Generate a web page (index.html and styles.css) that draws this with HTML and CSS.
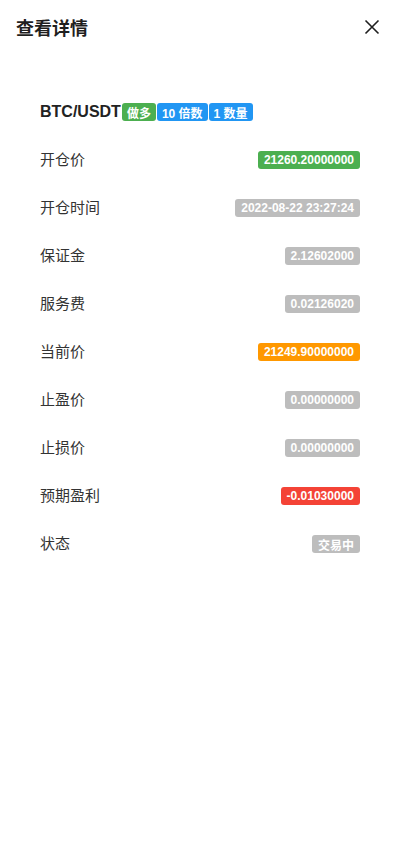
FILE: index.html
```html
<!DOCTYPE html>
<html lang="zh-CN">
  <head>
    <meta charset="UTF-8" />
    <meta name="viewport" content="width=device-width, initial-scale=1.0" />
    <title>查看详情</title>
    <link rel="stylesheet" href="styles.css">
  </head>
  <body>
    <header class="top">
      <h1>查看详情</h1>
      <button class="close" aria-label="关闭">
        <svg width="16" height="16" viewBox="0 0 16 16">
          <path d="M1.5 1.5 L14.5 14.5 M14.5 1.5 L1.5 14.5" stroke="#1f1f1f" stroke-width="1.6" fill="none" />
        </svg>
      </button>
    </header>
    <main class="detail">
      <div class="row">
        <div class="pair">
          <span class="symbol">BTC/USDT</span>
          <span class="tag green">做多</span>
          <span class="tag blue">10 倍数</span>
          <span class="tag blue">1 数量</span>
        </div>
      </div>
      <div class="row">
        <span class="label">开仓价</span>
        <span class="tag green">21260.20000000</span>
      </div>
      <div class="row">
        <span class="label">开仓时间</span>
        <span class="tag gray">2022-08-22 23:27:24</span>
      </div>
      <div class="row">
        <span class="label">保证金</span>
        <span class="tag gray">2.12602000</span>
      </div>
      <div class="row">
        <span class="label">服务费</span>
        <span class="tag gray">0.02126020</span>
      </div>
      <div class="row">
        <span class="label">当前价</span>
        <span class="tag orange">21249.90000000</span>
      </div>
      <div class="row">
        <span class="label">止盈价</span>
        <span class="tag gray">0.00000000</span>
      </div>
      <div class="row">
        <span class="label">止损价</span>
        <span class="tag gray">0.00000000</span>
      </div>
      <div class="row">
        <span class="label">预期盈利</span>
        <span class="tag red">-0.01030000</span>
      </div>
      <div class="row">
        <span class="label">状态</span>
        <span class="tag gray">交易中</span>
      </div>
    </main>
  </body>
</html>
```

FILE: styles.css
```css
body,
html {
  margin: 0;
  padding: 0;
  background-color: #fff;
  font-family: 'Liberation Sans', 'Noto Sans CJK SC', arial, sans-serif;
  color: #333;
}

.top {
  display: flex;
  justify-content: space-between;
  align-items: center;
  height: 56px;
  padding: 0 16px 2px;
  box-sizing: border-box;
}

h1 {
  margin: 0;
  font-size: 18px;
  font-weight: 700;
  color: #1f1f1f;
}

.close {
  display: flex;
  align-items: center;
  justify-content: center;
  width: 24px;
  height: 24px;
  padding: 0;
  border: none;
  background: none;
}

.detail {
  display: flex;
  flex-direction: column;
  padding: 32px 40px 0;
}

.row {
  display: flex;
  justify-content: space-between;
  align-items: center;
  height: 48px;
}

.label {
  font-size: 15px;
  color: #333;
  padding-bottom: 4px;
}

.pair {
  display: flex;
  align-items: center;
  gap: 1px;
}

.pair .tag {
  padding: 0 5px;
}

.symbol {
  font-size: 16px;
  font-weight: 700;
  color: #222;
}

.tag {
  display: inline-flex;
  align-items: center;
  height: 18px;
  padding: 0 6px;
  border-radius: 3px;
  font-size: 12px;
  font-weight: 700;
  color: #fff;
}

.green {
  background-color: #4caf50;
}

.blue {
  background-color: #2196f3;
}

.gray {
  background-color: #bdbdbd;
}

.orange {
  background-color: #ff9800;
}

.red {
  background-color: #f44336;
}
```
